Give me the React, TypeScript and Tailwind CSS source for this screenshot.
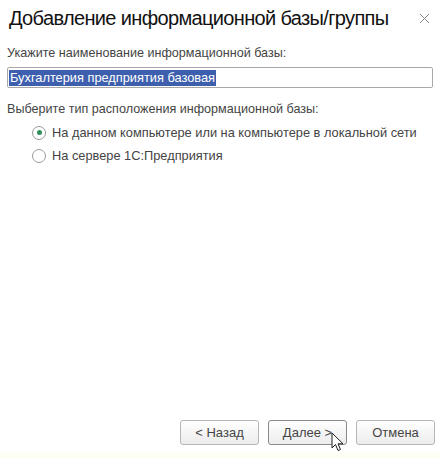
import React from 'react';

function Radio({ checked }: { checked?: boolean }) {
  return (
    <span className="flex h-[14px] w-[14px] items-center justify-center rounded-full border border-[#9a9a9a] bg-white">
      {checked && <span className="h-[5px] w-[5px] rounded-full bg-[#2f8f5b]" />}
    </span>
  );
}

function Cursor() {
  return (
    <svg width="14" height="21" viewBox="0 0 14 21" className="absolute left-[331px] top-[432px]">
      <path d="M1 1 L1 16 L4.5 12.5 L7 18.5 L9.5 17.5 L7 11.8 L12 11.8 Z" fill="white" stroke="#222" strokeWidth="1" strokeLinejoin="round" />
    </svg>
  );
}

export default function App() {
  return (
    <div
      className="relative flex h-[458px] w-[440px] flex-col bg-white text-[#333]"
      style={{ fontFamily: '"Liberation Sans", Arial, sans-serif' }}
    >
      <div className="flex items-start justify-between pl-[9px] pr-[9px] pt-[5px]">
        <h1 className="whitespace-nowrap text-[20px] leading-[26px] tracking-[-0.65px] text-[#111]">
          Добавление информационной базы/группы
        </h1>
        <svg width="11" height="11" viewBox="0 0 11 11" className="mt-[8px] mr-[1px]">
          <path d="M1 1 L10 10 M10 1 L1 10" stroke="#888" strokeWidth="1" />
        </svg>
      </div>

      <div className="px-[7px] pt-[15px]">
        <p className="text-[12.6px] leading-[15px] text-[#444]">Укажите наименование информационной базы:</p>
        <div className="mt-[6px] flex h-[21px] items-center rounded-[2px] border border-[#a8a8a8] px-[1px]">
          <span className="bg-[#3d5fae] px-[1px] text-[12.8px] leading-[16px] text-white">Бухгалтерия предприятия базовая</span>
        </div>
      </div>

      <div className="px-[7px] pt-[14px]">
        <p className="text-[12.6px] leading-[15px] text-[#444]">Выберите тип расположения информационной базы:</p>
        <div className="mt-[8px] flex flex-col gap-[8px] pl-[25px]">
          <label className="flex items-center gap-[6px] text-[12.8px] leading-[15px] text-[#444]">
            <Radio checked />
            На данном компьютере или на компьютере в локальной сети
          </label>
          <label className="flex items-center gap-[6px] text-[12.8px] leading-[15px] text-[#444]">
            <Radio />
            На сервере 1С:Предприятия
          </label>
        </div>
      </div>

      <div className="flex-1" />

      <div className="flex justify-end gap-[9px] pr-[5px]">
        {['< Назад', 'Далее >', 'Отмена'].map((t, i) => (
          <button
            key={t}
            className={`h-[25px] w-[79px] rounded-[3px] border bg-gradient-to-b from-white to-[#ececec] text-[13px] text-[#444] ${
              i === 1 ? 'border-[#8a8a8a]' : 'border-[#b5b5b5]'
            }`}
          >
            {t}
          </button>
        ))}
      </div>
      <div className="mt-[5px] h-[8px] bg-gradient-to-b from-white to-[#fdfdee]" />
      <Cursor />
    </div>
  );
}
